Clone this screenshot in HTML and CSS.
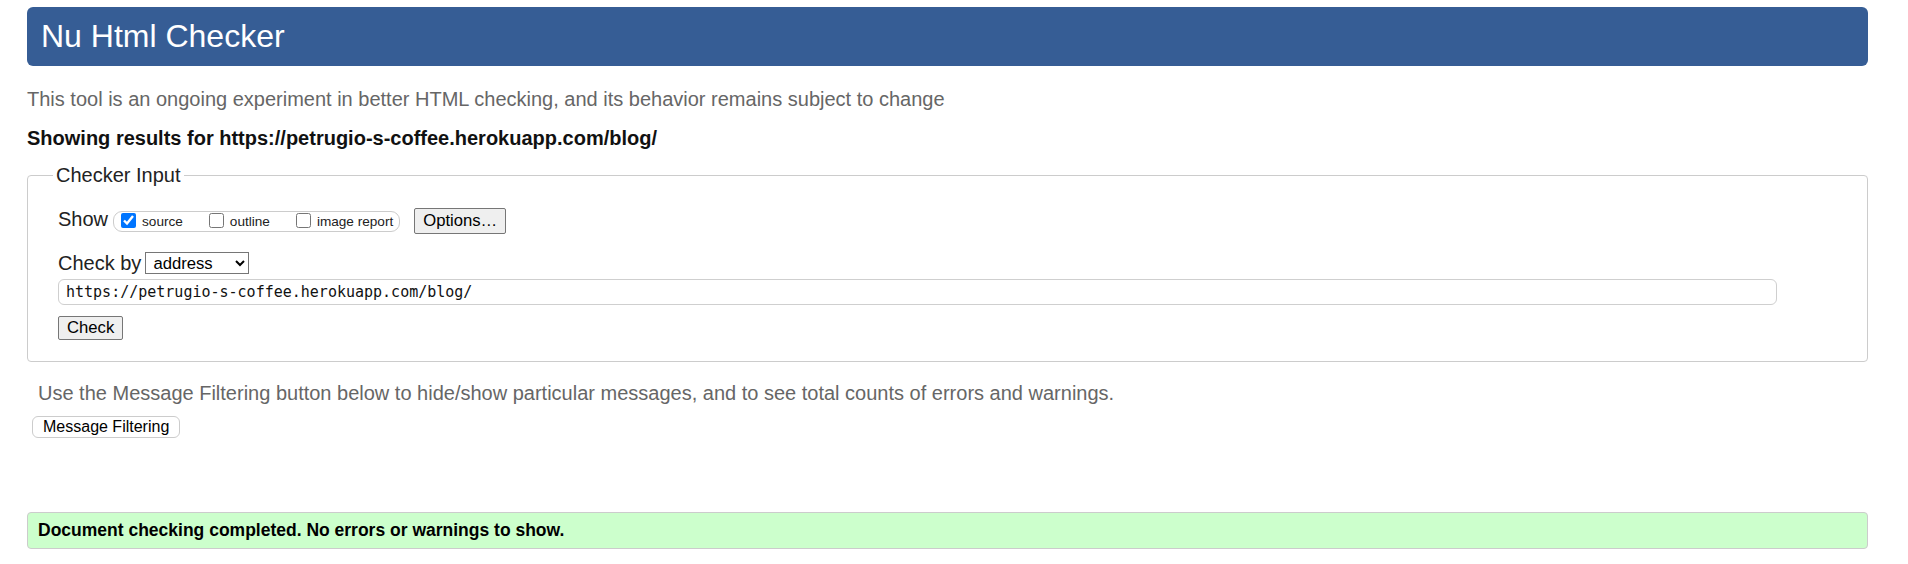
FILE: index.html
```html
<!DOCTYPE html>
<html lang="en">
<head>
<meta charset="utf-8">
<title>Nu Html Checker</title>
<link rel="stylesheet" href="styles.css">
</head>
<body>
<div class="page">
  <h1 class="banner">Nu Html Checker</h1>
  <p class="intro">This tool is an ongoing experiment in better HTML checking, and its behavior remains subject to change</p>
  <p class="showing">Showing results for https://petrugio-s-coffee.herokuapp.com/blog/</p>
  <fieldset class="checker">
    <legend class="checker-legend">Checker Input</legend>
    <div class="fs-body">
      <div class="show-row">
        <span class="row-label">Show</span>
        <div class="show-group">
          <label class="opt"><input type="checkbox" class="cb" checked><span class="opt-text">source</span></label>
          <label class="opt"><input type="checkbox" class="cb"><span class="opt-text">outline</span></label>
          <label class="opt"><input type="checkbox" class="cb"><span class="opt-text">image report</span></label>
        </div>
        <button class="btn btn-options" type="button">Options…</button>
      </div>
      <div class="check-row">
        <span class="row-label">Check by</span>
        <select class="sel"><option>address</option></select>
      </div>
      <input class="url" type="text" value="https://petrugio-s-coffee.herokuapp.com/blog/">
      <div class="check-btn-row"><button class="btn btn-check" type="button">Check</button></div>
    </div>
  </fieldset>
  <p class="filter-note">Use the Message Filtering button below to hide/show particular messages, and to see total counts of errors and warnings.</p>
  <button class="btn-filter" type="button">Message Filtering</button>
  <div class="success">Document checking completed. No errors or warnings to show.</div>
</div>
</body>
</html>
```
FILE: styles.css
```css
html, body {
  margin: 0;
  padding: 0;
  background: #fff;
}
body {
  font-family: "Liberation Sans", Arial, sans-serif;
  color: #111;
}
.page {
  padding: 7px 40px 0 27px;
}
.banner {
  margin: 0;
  height: 59px;
  line-height: 59px;
  background: #365d95;
  color: #fff;
  border-radius: 6px;
  font-size: 32px;
  font-weight: normal;
  padding-left: 14px;
}
.intro {
  margin: 22px 0 0 0;
  font-size: 20px;
  line-height: 23px;
  color: #666;
}
.showing {
  margin: 16px 0 0 0;
  font-size: 20px;
  line-height: 23px;
  font-weight: bold;
  color: #111;
}
.checker {
  margin: 14px 0 0 0;
  border: 1px solid #cccccc;
  border-radius: 4px;
  padding: 0 0 21px 25px;
  min-width: 0;
}
.checker-legend {
  padding: 0 3px;
  font-size: 20px;
  line-height: 23px;
  color: #222;
}
.fs-body {
  padding-left: 5px;
}
.show-row {
  display: flex;
  align-items: flex-start;
  margin-top: 21px;
  height: 26px;
}
.row-label {
  font-size: 20px;
  line-height: 23px;
  color: #222;
}
.show-group {
  display: flex;
  align-items: center;
  gap: 26px;
  box-sizing: border-box;
  height: 21px;
  margin: 3px 0 0 5px;
  padding: 0 6px 0 7px;
  border: 1px solid #cccccc;
  border-radius: 9px;
}
.opt {
  display: flex;
  align-items: center;
  gap: 6px;
}
.cb {
  width: 15px;
  height: 15px;
  margin: -3px 0 0 0;
  accent-color: #0075ff;
}
.opt-text {
  font-size: 13.6px;
  line-height: 16px;
  color: #222;
}
.btn {
  font-family: "Liberation Sans", Arial, sans-serif;
  font-size: 16.67px;
  color: #000;
  background: #efefef;
  border: 1px solid #767676;
  border-radius: 2px;
  padding: 0 8px;
}
.btn-options {
  height: 26px;
  margin-left: 14px;
}
.check-row {
  display: flex;
  align-items: flex-start;
  margin-top: 18px;
}
.sel {
  width: 104px;
  height: 22px;
  margin-left: 4px;
  font-family: "Liberation Sans", Arial, sans-serif;
  font-size: 16.67px;
  color: #000;
  background: #fff;
  border: 1px solid #767676;
  border-radius: 0;
  padding: 0 0 0 3px;
}
.url {
  display: block;
  box-sizing: border-box;
  width: 95%;
  height: 26px;
  margin-top: 4px;
  padding: 0 7px;
  font-family: "DejaVu Sans Mono", "Liberation Mono", monospace;
  font-size: 15px;
  color: #111;
  border: 1px solid #cfcfcf;
  border-radius: 6px;
  background: #fff;
}
.check-btn-row {
  margin-top: 11px;
  display: flex;
}
.btn-check {
  height: 24px;
}
.filter-note {
  margin: 20px 0 0 11px;
  font-size: 20px;
  line-height: 23px;
  color: #666;
}
.btn-filter {
  display: block;
  margin: 11px 0 0 5px;
  height: 22px;
  padding: 0 10px;
  font-family: "Liberation Sans", Arial, sans-serif;
  font-size: 16px;
  color: #000;
  background: #fff;
  border: 1px solid #cccccc;
  border-radius: 6px;
}
.success {
  margin-top: 74px;
  box-sizing: border-box;
  height: 37px;
  padding: 7px 10px 0 10px;
  background: #ccffcc;
  border: 1px solid #cccccc;
  border-radius: 4px;
  font-size: 17.5px;
  line-height: 20px;
  font-weight: bold;
  color: #000;
}
```
